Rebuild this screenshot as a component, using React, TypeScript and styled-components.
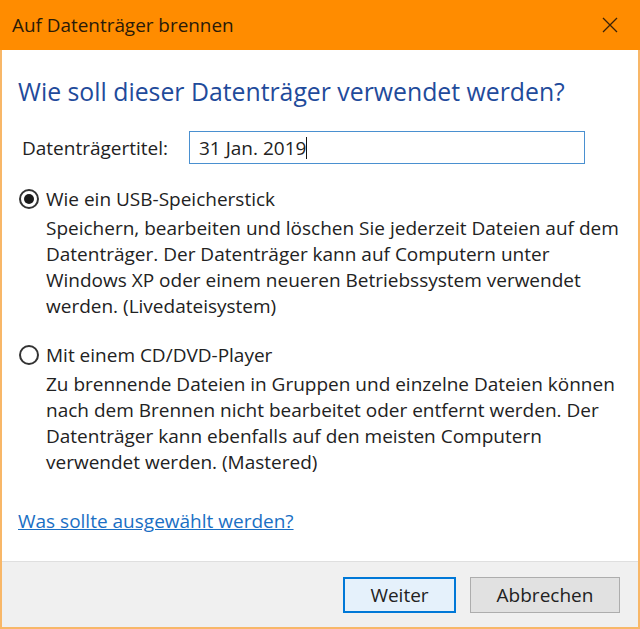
import React from 'react';
import styled, { createGlobalStyle } from 'styled-components';

const GlobalStyle = createGlobalStyle`
  html, body {
    margin: 0;
    padding: 0;
    background: #ffffff;
  }
  * {
    box-sizing: border-box;
  }
`;

const Window = styled.div`
  width: 640px;
  height: 629px;
  display: flex;
  flex-direction: column;
  border: 2px solid #f8b768;
  border-top: none;
  font-family: 'Open Sans', 'Noto Sans', sans-serif;
  font-size: 19px;
  color: #222;
  background: #fff;
`;

const TitleBar = styled.div`
  height: 50px;
  margin: 0 -2px;
  background: #ff8c00;
  display: flex;
  align-items: center;
  justify-content: space-between;
  padding: 0 18px 0 12px;
  font-size: 18.9px;
  color: #2a1a08;
`;

const CloseButton = styled.button`
  width: 24px;
  height: 24px;
  padding: 0;
  border: none;
  background: transparent;
  display: flex;
  align-items: center;
  justify-content: center;
`;

const Content = styled.div`
  flex: 1;
  padding: 25px 16px 0 16px;
  display: flex;
  flex-direction: column;
`;

const Heading = styled.h1`
  margin: 0;
  font-size: 24.8px;
  font-weight: 400;
  line-height: 32px;
  color: #1f4b9b;
`;

const TitleRow = styled.div`
  margin-top: 24px;
  display: flex;
  align-items: center;
  padding-left: 4px;
`;

const Label = styled.label`
  width: 167px;
`;

const TextInput = styled.div`
  width: 396px;
  height: 33px;
  border: 1px solid #4a90d0;
  display: flex;
  align-items: center;
  padding-left: 9px;

  &::after {
    content: '';
    width: 1px;
    height: 22px;
    background: #111;
  }
`;

const Option = styled.div<{ $gap: number }>`
  margin-top: ${({ $gap }) => $gap}px;
  display: flex;
  flex-direction: column;
`;

const OptionHead = styled.div`
  display: flex;
  align-items: center;
  height: 26px;
`;

const Radio = styled.span<{ $checked?: boolean }>`
  width: 20px;
  height: 20px;
  margin: 0 7px 0 1px;
  border-radius: 50%;
  border: 2px solid #333;
  display: flex;
  align-items: center;
  justify-content: center;

  &::after {
    content: '';
    width: 10px;
    height: 10px;
    border-radius: 50%;
    background: ${({ $checked }) => ($checked ? '#1a1a1a' : 'transparent')};
  }
`;

const Description = styled.div`
  padding-left: 28px;
  margin-top: 3px;
  line-height: 26px;

  & span {
    display: block;
    white-space: nowrap;
  }
`;

const LinkRow = styled.div`
  margin-top: 33px;
  line-height: 26px;
`;

const HelpLink = styled.a`
  color: #1a6fc4;
  text-decoration: underline;
`;

const Footer = styled.div`
  height: 66px;
  background: #f0f0f0;
  border-top: 1px solid #dfdfdf;
  display: flex;
  justify-content: flex-end;
  align-items: center;
  gap: 14px;
  padding: 0 18px 0 0;
`;

const Button = styled.button<{ $primary?: boolean }>`
  height: 36px;
  width: ${({ $primary }) => ($primary ? 113 : 150)}px;
  font-family: inherit;
  font-size: 19px;
  color: #222;
  background: ${({ $primary }) => ($primary ? '#e5f1fb' : '#e1e1e1')};
  border: ${({ $primary }) => ($primary ? '2px solid #0078d7' : '1px solid #adadad')};
  padding: 0;
`;

const options = [
  {
    title: 'Wie ein USB-Speicherstick',
    checked: true,
    gap: 22,
    lines: [
      'Speichern, bearbeiten und löschen Sie jederzeit Dateien auf dem',
      'Datenträger. Der Datenträger kann auf Computern unter',
      'Windows XP oder einem neueren Betriebssystem verwendet',
      'werden. (Livedateisystem)',
    ],
  },
  {
    title: 'Mit einem CD/DVD-Player',
    checked: false,
    gap: 23,
    lines: [
      'Zu brennende Dateien in Gruppen und einzelne Dateien können',
      'nach dem Brennen nicht bearbeitet oder entfernt werden. Der',
      'Datenträger kann ebenfalls auf den meisten Computern',
      'verwendet werden. (Mastered)',
    ],
  },
];

function App() {
  return (
    <>
      <GlobalStyle />
      <Window>
        <TitleBar>
          <span>Auf Datenträger brennen</span>
          <CloseButton type="button" aria-label="Schließen">
            <svg width="16" height="16" viewBox="0 0 16 16">
              <path d="M1 1 L15 15 M15 1 L1 15" stroke="#3a2208" strokeWidth="1.3" />
            </svg>
          </CloseButton>
        </TitleBar>
        <Content>
          <Heading>Wie soll dieser Datenträger verwendet werden?</Heading>
          <TitleRow>
            <Label>Datenträgertitel:</Label>
            <TextInput>31 Jan. 2019</TextInput>
          </TitleRow>
          {options.map((option) => (
            <Option key={option.title} $gap={option.gap}>
              <OptionHead>
                <Radio $checked={option.checked} />
                {option.title}
              </OptionHead>
              <Description>
                {option.lines.map((line) => (
                  <span key={line}>{line}</span>
                ))}
              </Description>
            </Option>
          ))}
          <LinkRow>
            <HelpLink href="#">Was sollte ausgewählt werden?</HelpLink>
          </LinkRow>
        </Content>
        <Footer>
          <Button type="button" $primary>
            Weiter
          </Button>
          <Button type="button">Abbrechen</Button>
        </Footer>
      </Window>
    </>
  );
}

export default App;
